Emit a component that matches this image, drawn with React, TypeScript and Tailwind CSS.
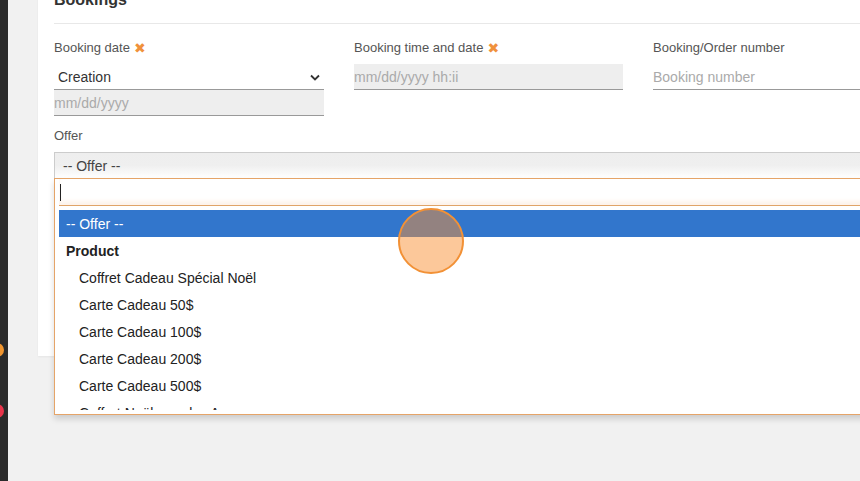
import React from 'react';

const XMark: React.FC = () => (
  <span className="ml-[4px] text-[14px] leading-none text-[#f0913c] font-['DejaVu_Sans',sans-serif]">✖</span>
);

const Label: React.FC<{ text: string; required?: boolean }> = ({ text, required }) => (
  <div className="flex items-center h-[16px] text-[13px] leading-[16px] text-[#555]">
    {text}
    {required && <XMark />}
  </div>
);

const products = [
  'Coffret Cadeau Spécial Noël',
  'Carte Cadeau 50$',
  'Carte Cadeau 100$',
  'Carte Cadeau 200$',
  'Carte Cadeau 500$',
  'Coffret Noël pour les Amoureux',
];

const App: React.FC = () => {
  return (
    <div className="relative flex w-[860px] h-[481px] overflow-hidden bg-[#f1f1f1] font-['Liberation_Sans',Arial,sans-serif]">
      {/* Sidebar edge */}
      <aside className="relative w-[8px] shrink-0 bg-[#2b2b2b]">
        <span className="absolute left-[-10px] top-[343px] w-[14px] h-[14px] rounded-full bg-[#f0952f]"></span>
        <span className="absolute left-[-10px] top-[404px] w-[14px] h-[14px] rounded-full bg-[#e8344a]"></span>
      </aside>

      <main className="flex-1 pl-[30px]">
        <div className="w-[860px] h-[366px] -mt-[10px] bg-white px-[16px] shadow-[0_1px_2px_rgba(0,0,0,0.05)]">
          <h2 className="h-[20px] leading-[20px] text-[16px] font-bold text-[#333] pb-[13px] box-content border-b border-[#e8e8e8]">
            Bookings
          </h2>

          <div className="grid grid-cols-[270px_269px_270px] gap-x-[30px] mt-[16px]">
            <div>
              <Label text="Booking date" required />
              <div className="mt-[8px] flex items-center justify-between h-[26px] border-b border-[#999] pl-[4px] pr-[4px] pt-[2px] text-[14px] text-[#333]">
                <span>Creation</span>
                <svg width="10" height="7" viewBox="0 0 10 7" fill="none">
                  <path d="M1 1.5 L5 5.5 L9 1.5" stroke="#333" strokeWidth="1.8" />
                </svg>
              </div>
              <div className="flex items-center h-[26px] bg-[#eee] border-b border-[#999] pt-[2px] text-[14px] text-[#aaa]">
                mm/dd/yyyy
              </div>
            </div>
            <div>
              <Label text="Booking time and date" required />
              <div className="mt-[8px] flex items-center h-[26px] bg-[#eee] border-b border-[#999] pt-[2px] text-[14px] text-[#aaa]">
                mm/dd/yyyy hh:ii
              </div>
            </div>
            <div>
              <Label text="Booking/Order number" />
              <div className="mt-[8px] flex items-center h-[26px] border-b border-[#999] pt-[2px] text-[14px] text-[#aaa]">
                Booking number
              </div>
            </div>
          </div>

          <div className="mt-[12px]">
            <Label text="Offer" />
            <div className="relative mt-[8px]">
              <div className="flex items-center h-[26px] border-t border-l border-[#ccc] bg-gradient-to-b from-[#eee] via-[#efefef] to-white pl-[8px] pt-[2px] text-[14px] text-[#444]">
                -- Offer --
              </div>

              {/* Open dropdown */}
              <div className="absolute left-0 top-full w-[840px] h-[237px] z-10 bg-white border border-[#e5a468] shadow-[0_4px_6px_rgba(0,0,0,0.15)] px-[4px] overflow-hidden">
                <div className="flex items-center h-[27px] border-b border-[#e0a468] shadow-[inset_0_-4px_4px_rgba(240,160,90,0.12)] pl-[1px]">
                  <span className="w-[1px] h-[17px] bg-[#222]"></span>
                </div>
                <ul className="mt-[4px] h-[200px] overflow-hidden text-[14px] text-[#222]">
                  <li className="flex items-center h-[27px] bg-[#3276cc] text-white pl-[7px] pt-[1px]">-- Offer --</li>
                  <li className="flex items-center h-[27px] pl-[7px] pt-[1px] font-bold">Product</li>
                  {products.map((p) => (
                    <li key={p} className="flex items-center h-[27px] pl-[20px] pt-[1px]">
                      {p}
                    </li>
                  ))}
                </ul>
              </div>
            </div>
          </div>
        </div>
      </main>

      {/* Click highlight */}
      <span className="absolute left-[398px] top-[208px] w-[66px] h-[66px] rounded-full z-20 bg-[rgba(249,142,48,0.49)] border-2 border-[#f29136]"></span>
    </div>
  );
};

export default App;
